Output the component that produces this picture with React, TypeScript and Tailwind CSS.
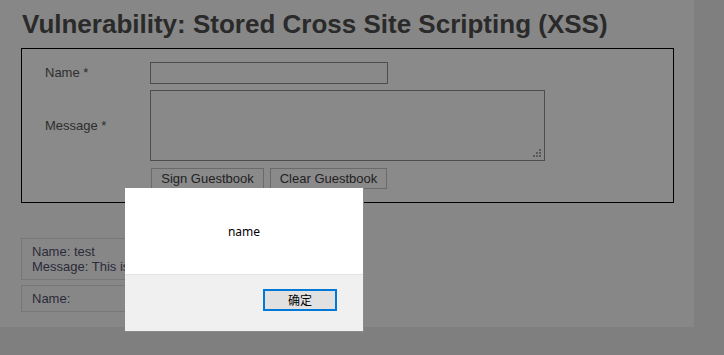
export default function App() {
  return (
    <div className="relative w-[724px] h-[355px] bg-[#7f7f7f] font-['Liberation_Sans',Arial,sans-serif] overflow-hidden">
      {/* main body */}
      <div className="w-[694px] h-[327px] bg-[#878787] pl-[21px] pt-[9px]">
        <h1 className="text-[26px] leading-[30px] font-bold text-[#2a2a2a] pl-px">
          Vulnerability: Stored Cross Site Scripting (XSS)
        </h1>

        {/* form */}
        <div className="mt-[9px] w-[653px] h-[155px] border border-black bg-[#898a89] pl-[23px] pt-[13px]">
          <div className="flex items-center h-[22px]">
            <span className="w-[105px] text-[13px] text-[#2e2e2e]">Name *</span>
            <div className="w-[238px] h-[22px] border border-[#4d4d4d] bg-[#898989]" />
          </div>
          <div className="flex items-center mt-[6px] h-[71px]">
            <span className="w-[105px] text-[13px] text-[#2e2e2e]">Message *</span>
            <div className="relative w-[395px] h-[71px] border border-[#4d4d4d] bg-[#898989]">
              <svg className="absolute right-[2px] bottom-[2px]" width="9" height="9" viewBox="0 0 9 9">
                <rect x="6" y="0" width="2" height="2" fill="#5a5a5a" />
                <rect x="3" y="3" width="2" height="2" fill="#5a5a5a" />
                <rect x="6" y="3" width="2" height="2" fill="#5a5a5a" />
                <rect x="0" y="6" width="2" height="2" fill="#5a5a5a" />
                <rect x="3" y="6" width="2" height="2" fill="#5a5a5a" />
                <rect x="6" y="6" width="2" height="2" fill="#5a5a5a" />
              </svg>
            </div>
          </div>
          <div className="flex gap-[6px] mt-[7px] pl-[106px]">
            <button className="w-[113px] h-[21px] border border-[#6a6a6a] bg-[#8a8a8a] text-[13px] text-[#222] leading-none">
              Sign Guestbook
            </button>
            <button className="w-[117px] h-[21px] border border-[#6a6a6a] bg-[#8a8a8a] text-[13px] text-[#222] leading-none">
              Clear Guestbook
            </button>
          </div>
        </div>

        {/* guestbook */}
        <div className="mt-[35px] w-[320px] h-[42px] border border-[#777] pl-[10px] pt-[5px] text-[13px] leading-[15px] text-[#2b2b3a]">
          <div>Name: test</div>
          <div className="whitespace-nowrap">Message: This is a test comment.</div>
        </div>
        <div className="mt-[5px] w-[320px] h-[27px] border border-[#777] pl-[10px] pt-[5px] text-[13px] leading-[15px] text-[#2b2b3a]">
          Name:
        </div>
      </div>

      {/* alert dialog */}
      <div className="absolute left-[125px] top-[188px] w-[239px] h-[144px] border-r border-b border-[#8c8c8c] flex flex-col font-['Noto_Sans','Noto_Sans_CJK_SC',sans-serif]">
        <div className="h-[87px] bg-white border-b border-[#e3e3e3] flex items-center justify-center text-[12px] text-black pt-px">
          name
        </div>
        <div className="flex-1 bg-[#f0f0f0] flex justify-end items-start pt-[14px] pr-[26px]">
          <button className="w-[74px] h-[22px] border-2 border-[#0078d7] bg-[#e1e1e1] text-[12px] text-black leading-none font-['Noto_Sans_CJK_SC',sans-serif]">
            确定
          </button>
        </div>
      </div>
    </div>
  );
}
